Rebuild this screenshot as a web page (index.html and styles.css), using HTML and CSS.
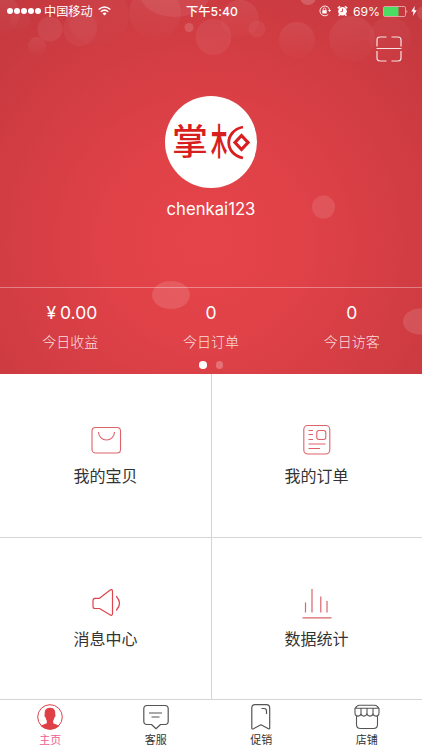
FILE: index.html
```html
<!DOCTYPE html>
<html lang="zh-CN">
<head>
<meta charset="utf-8">
<meta name="viewport" content="width=device-width, initial-scale=1">
<title>掌柜</title>
<link rel="stylesheet" href="styles.css">
</head>
<body>
<div class="app">
  <section class="hero">
    <svg class="bokeh" width="422" height="374" viewBox="0 0 422 374" fill="#fff" aria-hidden="true">
      <defs>
        <linearGradient id="fade" x1="0" y1="0" x2="0" y2="1"><stop offset="0" stop-color="#fff" stop-opacity=".07"/><stop offset="1" stop-color="#fff" stop-opacity=".01"/></linearGradient>
      </defs>
      <g fill="url(#fade)">
        <circle cx="0" cy="14" r="20"/><circle cx="20" cy="22" r="10" opacity=".5"/>
        <circle cx="98" cy="16" r="31" opacity=".6"/><circle cx="155" cy="13" r="26"/>
        <circle cx="37" cy="46" r="9"/><circle cx="297" cy="40" r="18"/>
        <circle cx="352" cy="39" r="23"/><circle cx="390" cy="38" r="21" opacity=".6"/>
        <circle cx="240" cy="19" r="19"/>
      </g>
      <ellipse cx="175" cy="-6" rx="35" ry="23" opacity=".07"/>
      <circle cx="50" cy="29" r="12.5" opacity=".07"/>
      <circle cx="80" cy="29" r="17" opacity=".04"/><circle cx="84" cy="25" r="14" opacity=".02"/>
      <circle cx="189" cy="27.5" r="4.5" opacity=".15"/>
      <circle cx="213.500" cy="37" r="18" opacity=".06"/>
      <circle cx="257" cy="29" r="8.500" opacity=".05"/>
      <circle cx="308" cy="-3" r="8" opacity=".18"/>
      <circle cx="424" cy="13" r="7" opacity=".1"/>
      <circle cx="323.500" cy="207" r="11.500" opacity=".11"/>
      <ellipse cx="171" cy="295" rx="19" ry="14" opacity=".13"/>
      <ellipse cx="420" cy="321.500" rx="17" ry="13" opacity=".12"/>
    </svg>

    <header class="status">
      <div class="status-left">
        <span class="signal"><i></i><i></i><i></i><i></i><i></i></span>
        <span>中国移动</span>
        <svg class="wifi" width="13" height="10" viewBox="0 0 13 10" fill="none" stroke="#fff" stroke-width="1.5"><path d="M.7 3.500Q6.500-1.500 12.300 3.500M2.800 5.700Q6.500 2.500 10.200 5.700"/><path d="M4.500 7.400Q6.500 5.700 8.500 7.400L6.500 9.500Z" fill="#fff" stroke="none"/></svg>
      </div>
      <div class="status-time">下午5:40</div>
      <div class="status-right">
        <svg width="12" height="12" viewBox="0 0 12 12" fill="none" stroke="#fff"><path d="M9.200 9.500A4.900 4.900 0 1 1 10.700 5.200" stroke-width=".9"/><path d="M9 5h3L10.600 7Z" fill="#fff" stroke="none"/><rect x="3.300" y="5.200" width="4.400" height="3.300" fill="#fff" stroke="none"/><path d="M4.200 5.500V4.200a1.300 1.300 0 0 1 2.600 0v1.300" stroke-width=".8"/></svg>
        <svg class="alarm" width="11" height="12" viewBox="0 0 11 12"><circle cx="5.500" cy="6.300" r="4.300" fill="#fff"/><path d="M.8 3.200L3 1.200M8 1.200l2.200 2M2.700 9.500l-1 1.300M8.300 9.500l1 1.300" stroke="#fff" stroke-width="1.500"/><path d="M5.500 3.600v3H3.500" fill="none" stroke="#d33f45" stroke-width=".9"/></svg>
        <span class="percent">69%</span>
        <svg width="25" height="11" viewBox="0 0 25 11"><rect x=".5" y=".5" width="22" height="10" rx="1.300" fill="none" stroke="#fff" stroke-opacity=".65" stroke-width=".8"/><rect x="1" y="1" width="14.500" height="9" fill="#4bdc64"/><path d="M23.600 3.700q1.400 1.800 0 3.600Z" fill="#fff"/></svg>
        <svg class="bolt" width="6" height="10" viewBox="0 0 6 10"><path d="M3.700 0L.3 5.500h2.200L1.800 10l3.900-5.700H3.400Z" fill="#fff"/></svg>
      </div>
    </header>

    <div class="toolbar">
      <svg width="26" height="26" viewBox="0 0 26 26" fill="none" stroke="#fff" stroke-opacity=".85" stroke-width="1.200"><path d="M10.500 1H4Q1 1 1 4v6.500M15.500 1H22q3 0 3 3v6.500M1 15v7q0 3 3 3h6.500M25 15v7q0 3-3 3h-6.500M.5 12.500h25"/></svg>
    </div>

    <div class="profile">
      <div class="avatar">
        <span class="mark">掌</span><span class="mark mark-wood">木</span>
        <svg class="coin" width="23" height="35" viewBox="0 0 23 35" fill="none" stroke="#d91e20"><path d="M16 2C-3 6-3 29 16 33" stroke-width="2.800"/><path d="M14.500 10.500L21 17.500L14.500 24.500L8 17.500Z" stroke-width="3.200"/></svg>
      </div>
      <div class="name">chenkai123</div>
    </div>

    <div class="stats">
      <div class="stat"><div class="value"><span class="yen">¥</span>0.00</div><div class="label">今日收益</div></div>
      <div class="stat"><div class="value">0</div><div class="label">今日订单</div></div>
      <div class="stat"><div class="value">0</div><div class="label">今日访客</div></div>
    </div>
    <div class="dots"><i class="on"></i><i></i></div>
  </section>

  <main class="menu">
    <div class="cell">
      <svg width="32" height="32" viewBox="0 0 32 32" fill="none" stroke="#de6269" stroke-width="1.100"><rect x="2" y="3.500" width="28.500" height="25.500" rx="3.500"/><path d="M8.500 8a8 8 0 0 0 16 0"/></svg>
      <span>我的宝贝</span>
    </div>
    <div class="cell">
      <svg width="32" height="32" viewBox="0 0 32 32" fill="none" stroke="#de6269" stroke-width="1.100"><rect x="2.800" y="1.500" width="26" height="28.500" rx="4"/><rect x="15.800" y="6.500" width="9" height="9" rx="2.200"/><path d="M7.500 6.500H12M7.500 10.500H12M7.500 15.500H12M7.500 20h17M7.500 24.500H19"/></svg>
      <span>我的订单</span>
    </div>
    <div class="cell">
      <svg width="32" height="32" viewBox="0 0 32 32" fill="none" stroke="#df454d" stroke-width="1.200" stroke-linejoin="round" stroke-linecap="round"><path d="M4 11.300h5.500L19.500 3.500Q22.500 1.300 22.500 4.500v22Q22.500 29.500 19.500 27.500L9.500 21.500H5q-2 0-2-2v-6q0-2.200 2-2.200M26.500 9.500q6 7 0 13.500"/></svg>
      <span>消息中心</span>
    </div>
    <div class="cell">
      <svg width="32" height="32" viewBox="0 0 32 32" fill="none" stroke="#d9646a" stroke-width="1.200"><path d="M4.500 15.500v10M11 2v23.500M19.800 9.500v16M26 14v11.500M1.500 30.800h29"/></svg>
      <span>数据统计</span>
    </div>
  </main>

  <nav class="tabs">
    <div class="tab active">
      <svg width="28" height="28" viewBox="0 0 28 28"><circle cx="14" cy="14" r="12.300" fill="#fff" stroke="#df4046" stroke-width="1"/><path d="M14 4.800c4.500 0 5.600 3 5.200 6.400.8.600.2 3-.8 3.300-.3 1.700-.8 2.800-1.200 3.300v2.400l6.300 2.500Q20 26.400 14 26.400T4.500 22.700l6.300-2.500v-2.400c-.6-.8-1-2-1.200-3.300-1-.4-1.600-2.600-.8-3.300-.4-3.400.8-6.400 5.200-6.400Z" fill="#df4046"/></svg>
      <span>主页</span>
    </div>
    <div class="tab">
      <svg width="28" height="28" viewBox="0 0 28 28" fill="none" stroke="#555" stroke-width="1.200" stroke-linejoin="round"><path d="M5 2.500h18q3.200 0 3.200 3.200v12.600q0 3.200-3.200 3.200h-4.500L14 25.700 9.500 21.500H5q-3.200 0-3.200-3.200V5.700Q1.800 2.500 5 2.500M7 10h13M9.500 14h8"/></svg>
      <span>客服</span>
    </div>
    <div class="tab">
      <svg width="28" height="28" viewBox="0 0 28 28" fill="none" stroke="#555" stroke-width="1.200" stroke-linejoin="round"><path d="M8 1.700h11.500q3.200 0 3.200 3.200v20Q22.700 26.500 21 25.500L14 21.800 6.500 25.700Q4.800 26.500 4.800 25V4.900Q4.800 1.700 8 1.700M14.500 5.500h2.500q2.500 0 2.500 2.500v3" /></svg>
      <span>促销</span>
    </div>
    <div class="tab">
      <svg width="28" height="28" viewBox="0 0 28 28" fill="none" stroke="#555" stroke-width="1.100" stroke-linejoin="round"><path d="M6.500 2.300h15q1.800 0 2.800 1.200l1.700 1.800v4.500a3 3.300 0 0 1-6 0a3 3.300 0 0 1-6 0a3 3.300 0 0 1-6 0a3 3.300 0 0 1-6 0V5.300l1.700-1.800q1-1.200 2.800-1.200M2 5.300h24M8 5.300v4.500M14 5.300v4.500M20 5.300v4.500M3.500 13v8.500q0 4 4 4h13q4 0 4-4V13"/></svg>
      <span>店铺</span>
    </div>
  </nav>
</div>
</body>
</html>
```
FILE: styles.css
```css
* { box-sizing: border-box; }

body {
  margin: 0;
  font-family: Inter, "Noto Sans CJK SC", sans-serif;
  color: #333;
}

svg { display: block; flex: none; }

.app {
  width: 422px;
  height: 750px;
  display: flex;
  flex-direction: column;
  overflow: hidden;
  background: #fff;
}

.hero {
  position: relative;
  height: 374px;
  flex: none;
  display: flex;
  flex-direction: column;
  color: #fff;
  background: radial-gradient(circle 320px at 205px 242px, #e5444a 0%, #e04248 30%, #cf3c42 70%, #c2383e 100%);
}

.bokeh { position: absolute; inset: 0; }

.status, .toolbar, .profile, .stats, .dots { position: relative; }

.status {
  height: 22px;
  display: grid;
  grid-template-columns: 1fr auto 1fr;
  align-items: center;
  padding: 0 5px 0 7px;
  font-size: 12.200px;
  line-height: 20px;
}

.status span:not(.signal), .status-time { padding-top: 1px; }
.status-left, .status-right { height: 21px; display: flex; align-items: center; }
.status-right { justify-content: flex-end; }
.signal { display: flex; gap: 1px; margin-right: 3px; }
.signal i { width: 6px; height: 6px; border-radius: 50%; background: #fff; }
.wifi { margin-left: 5px; }
.status-time { font-weight: 500; letter-spacing: .1px; }
.alarm { margin-left: 6px; }
.percent { margin: 0 3px 0 5px; }
.bolt { margin-left: 3px; }

.toolbar {
  height: 74px;
  display: flex;
  justify-content: flex-end;
  align-items: flex-start;
  padding: 14px 20px 0 0;
}

.profile {
  height: 191px;
  display: flex;
  flex-direction: column;
  align-items: center;
}

.avatar {
  width: 92px;
  height: 92px;
  border-radius: 50%;
  background: #fff;
  display: flex;
  align-items: center;
  justify-content: center;
}

.mark {
  flex: none;
  width: 36px;
  font-size: 36px;
  line-height: 36px;
  font-weight: 500;
  color: #d91e20;
}

.mark-wood {
  width: 16px;
  margin-left: 3px;
  font-weight: 700;
  transform: scaleX(.45);
  transform-origin: 0 50%;
}

.name { margin-top: 10px; font-size: 16.700px; line-height: 22px; }

.stats {
  height: 73px;
  display: grid;
  grid-template-columns: repeat(3, 1fr);
  border-top: 1px solid rgba(255, 255, 255, .35);
  text-align: center;
}

.value { margin-top: 14px; font-size: 17.500px; line-height: 22px; }
.yen { margin: 0 4px 0 3px; }
.label { margin-top: 8px; font-size: 14px; line-height: 20px; font-weight: 300; color: rgba(255, 255, 255, .85); }

.dots { display: flex; justify-content: center; gap: 9px; padding-top: 1px; }
.dots i { width: 7.500px; height: 7.500px; border-radius: 50%; background: rgba(255, 255, 255, .25); }
.dots .on { background: #fff; }

.menu {
  height: 326px;
  flex: none;
  display: grid;
  grid-template-columns: 212px 210px;
  grid-template-rows: 164px 162px;
  border-bottom: 1px solid #d5d5d8;
}

.cell {
  display: flex;
  flex-direction: column;
  align-items: center;
  padding-top: 50px;
  font-size: 16px;
  line-height: 24px;
}

.cell:nth-child(odd) { border-right: 1px solid #d5d5d8; }
.cell:nth-child(even) { padding-right: 1px; }
.cell:nth-child(-n+2) { border-bottom: 1px solid #d5d5d8; }
.cell:nth-child(n+3) { padding-top: 49px; }
.cell span { margin-top: 8px; }

.tabs {
  flex: 1;
  display: grid;
  grid-template-columns: repeat(4, 1fr);
}

.tab {
  display: flex;
  flex-direction: column;
  align-items: center;
  padding-top: 3px;
  padding-right: 5px;
  font-size: 11px;
  line-height: 18px;
}

.active span { color: #ee5c95; }
```
